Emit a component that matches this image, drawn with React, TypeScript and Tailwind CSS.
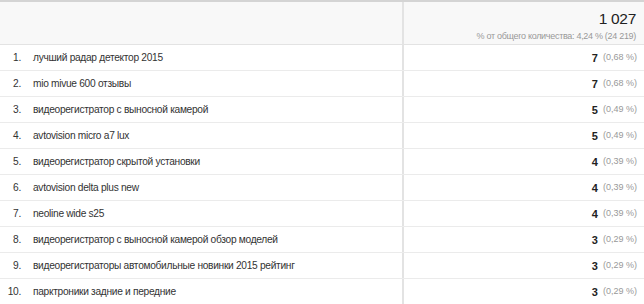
import React from "react";

const rows: [string, string, string][] = [
  ["лучший радар детектор 2015", "7", "(0,68 %)"],
  ["mio mivue 600 отзывы", "7", "(0,68 %)"],
  ["видеорегистратор с выносной камерой", "5", "(0,49 %)"],
  ["avtovision micro a7 lux", "5", "(0,49 %)"],
  ["видеорегистратор скрытой установки", "4", "(0,39 %)"],
  ["avtovision delta plus new", "4", "(0,39 %)"],
  ["neoline wide s25", "4", "(0,39 %)"],
  ["видеорегистратор с выносной камерой обзор моделей", "3", "(0,29 %)"],
  ["видеорегистраторы автомобильные новинки 2015 рейтинг", "3", "(0,29 %)"],
  ["парктроники задние и передние", "3", "(0,29 %)"],
];

export default function App() {
  return (
    <div
      className="w-[644px] h-[304px] overflow-hidden bg-white text-[#333]"
      style={{ fontFamily: '"Liberation Sans", Arial, sans-serif' }}
    >
      <div className="border-t-2 border-[#d4d4d4]">
        <div className="flex h-[43px] bg-[#f8f8f8] border-b border-[#e3e3e3]">
          <div className="w-[404px] border-r-2 border-[#e3e3e3]" />
          <div className="flex-1 flex flex-col items-end pr-[8px] pt-[8px]">
            <div className="text-[15.5px] leading-[18px] tracking-[-0.3px] text-[#222]">1 027</div>
            <div className="text-[9px] leading-[12px] tracking-[-0.3px] text-[#999] mt-[2px]">
              % от общего количества: 4,24 % (24 219)
            </div>
          </div>
        </div>
        {rows.map(([q, v, p], i) => (
          <div key={i} className="flex h-[26px] border-b border-[#ebebeb]">
            <div className="w-[404px] border-r-2 border-[#e3e3e3] flex items-center pt-[1px] text-[10.2px] tracking-[-0.3px]">
              <span className="w-[33px] pr-[12px] text-right shrink-0">{i + 1}.</span>
              <span>{q}</span>
            </div>
            <div className="flex-1 flex items-center justify-end pr-[7px] pt-[1px]">
              <span className="text-[11px] font-bold text-[#222]">{v}</span>
              <span className="text-[9px] text-[#999] ml-[5px]">{p}</span>
            </div>
          </div>
        ))}
      </div>
    </div>
  );
}
